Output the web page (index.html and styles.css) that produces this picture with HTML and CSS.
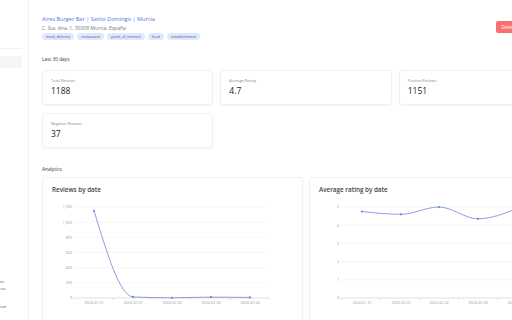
FILE: index.html
```html
<!DOCTYPE html>
<html>
<head>
    <title>Aires Burger Bar | Dashboard</title>
    <link rel="stylesheet" href="styles.css">
</head>
<body>
    <div class="layout">
        <aside class="sidebar">
            <div class="sidebar-inner">
                <div class="sidebar-brand"></div>
                <div class="nav-item"></div>
                <div class="sidebar-info">
                    <div>Aires Burger Bar | Santo</div>
                    <div>Domingo | 30008 Murcia</div>
                    <div class="info-web">info@airesburgerbar.com</div>
                </div>
            </div>
        </aside>

        <main class="main">
            <header class="place-header">
                <div>
                    <h1 class="place-name">Aires Burger Bar | Santo Domingo | Murcia</h1>
                    <p class="place-address">C. Sta. Ana, 1, 30008 Murcia, España</p>
                    <div class="tags">
                        <span class="tag">meal_delivery</span>
                        <span class="tag">restaurant</span>
                        <span class="tag">point_of_interest</span>
                        <span class="tag">food</span>
                        <span class="tag">establishment</span>
                    </div>
                </div>
                <div class="actions">
                    <button type="button" class="btn-delete">Delete</button>
                </div>
            </header>

            <section>
                <h2 class="section-title">Last 30 days</h2>
                <div class="stats">
                    <div class="stat-card">
                        <div class="stat-label">Total Reviews</div>
                        <div class="stat-value">1188</div>
                    </div>
                    <div class="stat-card">
                        <div class="stat-label">Average Rating</div>
                        <div class="stat-value">4.7</div>
                    </div>
                    <div class="stat-card">
                        <div class="stat-label">Positive Reviews</div>
                        <div class="stat-value">1151</div>
                    </div>
                    <div class="stat-card">
                        <div class="stat-label">Negative Reviews</div>
                        <div class="stat-value">37</div>
                    </div>
                </div>
            </section>

            <section>
                <h2 class="section-title analytics-title">Analytics</h2>
                <div class="charts">
                    <div class="chart-card">
                        <h3 class="chart-title">Reviews by date</h3>
                        <svg class="chart" width="240" height="112" viewBox="0 0 240 112">
                            <g class="grid">
                                <line x1="23" y1="8" x2="216" y2="8"/>
                                <line x1="23" y1="23.2" x2="216" y2="23.2"/>
                                <line x1="23" y1="38.3" x2="216" y2="38.3"/>
                                <line x1="23" y1="53.5" x2="216" y2="53.5"/>
                                <line x1="23" y1="68.7" x2="216" y2="68.7"/>
                                <line x1="23" y1="83.8" x2="216" y2="83.8"/>
                            </g>
                            <g class="axis">
                                <line x1="22" y1="99" x2="217" y2="99"/>
                                <line x1="22" y1="99" x2="22" y2="101"/>
                                <line x1="61" y1="99" x2="61" y2="101"/>
                                <line x1="100" y1="99" x2="100" y2="101"/>
                                <line x1="139" y1="99" x2="139" y2="101"/>
                                <line x1="178" y1="99" x2="178" y2="101"/>
                                <line x1="217" y1="99" x2="217" y2="101"/>
                            </g>
                            <g class="y-labels">
                                <text x="20" y="9.3">1,200</text>
                                <text x="20" y="24.5">1,000</text>
                                <text x="20" y="39.6">800</text>
                                <text x="20" y="54.8">600</text>
                                <text x="20" y="70">400</text>
                                <text x="20" y="85.1">200</text>
                                <text x="20" y="100.3">0</text>
                            </g>
                            <g class="x-labels">
                                <text x="42" y="105">2024-01-31</text>
                                <text x="81" y="105">2024-02-01</text>
                                <text x="120" y="105">2024-02-02</text>
                                <text x="159" y="105">2024-02-03</text>
                                <text x="198" y="105">2024-02-04</text>
                            </g>
                            <path class="line" d="M42,11.8 C55,54.4 68,97.3 81,97.9 C94,98.5 107,98.8 120,98.8 C133,98.8 146,98.1 159,98.1 C172,98.1 185,98.4 198,98.4"/>
                            <g class="dots">
                                <circle cx="42" cy="11.8" r="1.1"/>
                                <circle cx="81" cy="97.9" r="1.1"/>
                                <circle cx="120" cy="98.8" r="1.1"/>
                                <circle cx="159" cy="98.1" r="1.1"/>
                                <circle cx="198" cy="98.4" r="1.1"/>
                            </g>
                        </svg>
                    </div>
                    <div class="chart-card">
                        <h3 class="chart-title">Average rating by date</h3>
                        <svg class="chart" width="240" height="112" viewBox="0 0 240 112">
                            <g class="grid">
                                <line x1="22" y1="8" x2="216" y2="8"/>
                                <line x1="22" y1="26.2" x2="216" y2="26.2"/>
                                <line x1="22" y1="44.4" x2="216" y2="44.4"/>
                                <line x1="22" y1="62.6" x2="216" y2="62.6"/>
                                <line x1="22" y1="80.8" x2="216" y2="80.8"/>
                            </g>
                            <g class="axis">
                                <line x1="22" y1="99" x2="217" y2="99"/>
                                <line x1="22" y1="99" x2="22" y2="101"/>
                                <line x1="61.5" y1="99" x2="61.5" y2="101"/>
                                <line x1="100.5" y1="99" x2="100.5" y2="101"/>
                                <line x1="139.5" y1="99" x2="139.5" y2="101"/>
                                <line x1="178.5" y1="99" x2="178.5" y2="101"/>
                                <line x1="217" y1="99" x2="217" y2="101"/>
                            </g>
                            <g class="y-labels">
                                <text x="20" y="9.3">5</text>
                                <text x="20" y="27.5">4</text>
                                <text x="20" y="45.7">3</text>
                                <text x="20" y="63.9">2</text>
                                <text x="20" y="82.1">1</text>
                                <text x="20" y="100.3">0</text>
                            </g>
                            <g class="x-labels">
                                <text x="43" y="105">2024-01-31</text>
                                <text x="82" y="105">2024-02-01</text>
                                <text x="120" y="105">2024-02-02</text>
                                <text x="159" y="105">2024-02-03</text>
                                <text x="198" y="105">2024-02-04</text>
                            </g>
                            <path class="line" d="M43,12.5 C56,13.9 69,15.3 82,15.3 C94.7,15.3 107.3,8 120,8 C133,8 146,19.8 159,19.8 C172,19.8 185,14.7 198,9.5"/>
                            <g class="dots">
                                <circle cx="43" cy="12.5" r="1.1"/>
                                <circle cx="82" cy="15.3" r="1.1"/>
                                <circle cx="120" cy="8" r="1.1"/>
                                <circle cx="159" cy="19.8" r="1.1"/>
                                <circle cx="198" cy="9.5" r="1.1"/>
                            </g>
                        </svg>
                    </div>
                </div>
            </section>
        </main>
    </div>
</body>
</html>
```

FILE: styles.css
```css
body {
    margin: 0;
    background: #fff;
    font-family: "Open Sans", Arial, sans-serif;
    color: #222;
    overflow: hidden;
}

.layout {
    display: flex;
    height: 100vh;
}

/* sidebar is mostly scrolled out of view to the left */
.sidebar {
    width: 28px;
    flex-shrink: 0;
    border-right: 1px solid #efefef;
    overflow: hidden;
    display: flex;
    justify-content: flex-end;
}

.sidebar-inner {
    width: 61px;
    flex-shrink: 0;
    padding-right: 6px;
    display: flex;
    flex-direction: column;
}

.sidebar-brand {
    height: 48px;
    border-bottom: 1px solid #f0f0f0;
}

.nav-item {
    height: 12px;
    margin-top: 7px;
    background: #f5f6f8;
    border-radius: 2px;
}

.sidebar-info {
    margin-top: auto;
    padding-bottom: 10px;
    font-size: 3.8px;
    line-height: 7px;
    color: #555;
    white-space: nowrap;
}

.info-web {
    margin-top: 11px;
}

.main {
    width: 528px;
    flex-shrink: 0;
    padding: 14.5px 14px 0 13px;
}

.place-header {
    display: flex;
    justify-content: space-between;
    align-items: flex-start;
}

.place-name {
    margin: 0;
    font-size: 5.6px;
    line-height: 8px;
    font-weight: 500;
    color: #5b72e6;
}

.place-address {
    margin: 2px 0 0;
    font-size: 5px;
    line-height: 6px;
    color: #777;
}

.tags {
    display: flex;
    gap: 3px;
    margin-top: 2px;
}

.tag {
    background: #dfe8fc;
    color: #4a5890;
    font-size: 3.8px;
    line-height: 7.5px;
    padding: 0 4px;
    border-radius: 4px;
}

.actions {
    margin: 6.5px 50px 0 0;
    display: flex;
}

.btn-delete {
    background: #f87171;
    color: #fff;
    border: none;
    border-radius: 2px;
    font-family: inherit;
    font-size: 4.5px;
    padding: 0 5px;
    height: 12px;
    cursor: pointer;
}

.section-title {
    margin: 15.5px 0 0;
    font-size: 4.8px;
    line-height: 7px;
    font-weight: 500;
    color: #333;
}

.stats {
    display: grid;
    grid-template-columns: repeat(3, 1fr);
    gap: 8px 7px;
    margin-top: 7.5px;
}

.stat-card {
    border: 1px solid #f0f0f0;
    border-radius: 3px;
    box-shadow: 0 1px 2px rgba(0, 0, 0, 0.04);
    padding: 7px 8px 7px;
}

.stat-label {
    font-size: 3.8px;
    line-height: 6px;
    color: #888;
}

.stat-value {
    margin-top: 1px;
    font-size: 8.5px;
    line-height: 12px;
    color: #222;
}

.analytics-title {
    margin-top: 17.5px;
}

.charts {
    display: grid;
    grid-template-columns: repeat(2, 1fr);
    gap: 6px;
    margin-top: 4.5px;
}

.chart-card {
    border: 1px solid #f0f0f0;
    border-radius: 3px;
    box-shadow: 0 1px 2px rgba(0, 0, 0, 0.04);
    padding: 7px 9px 20px;
}

.chart-title {
    margin: 0;
    font-size: 6.3px;
    line-height: 10px;
    font-weight: 600;
    color: #444;
}

.chart {
    display: block;
    margin-top: 4px;
    overflow: visible;
}

.grid line {
    stroke: #f0f0f0;
    stroke-width: 0.6;
}

.axis line {
    stroke: #cfcfcf;
    stroke-width: 0.6;
}

.chart text {
    font-family: "Open Sans", Arial, sans-serif;
    font-size: 3.7px;
    fill: #999;
}

.y-labels text {
    text-anchor: end;
}

.x-labels text {
    text-anchor: middle;
}

.line {
    fill: none;
    stroke: #7084dd;
    stroke-width: 0.8;
}

.dots circle {
    fill: #7084dd;
}
```
